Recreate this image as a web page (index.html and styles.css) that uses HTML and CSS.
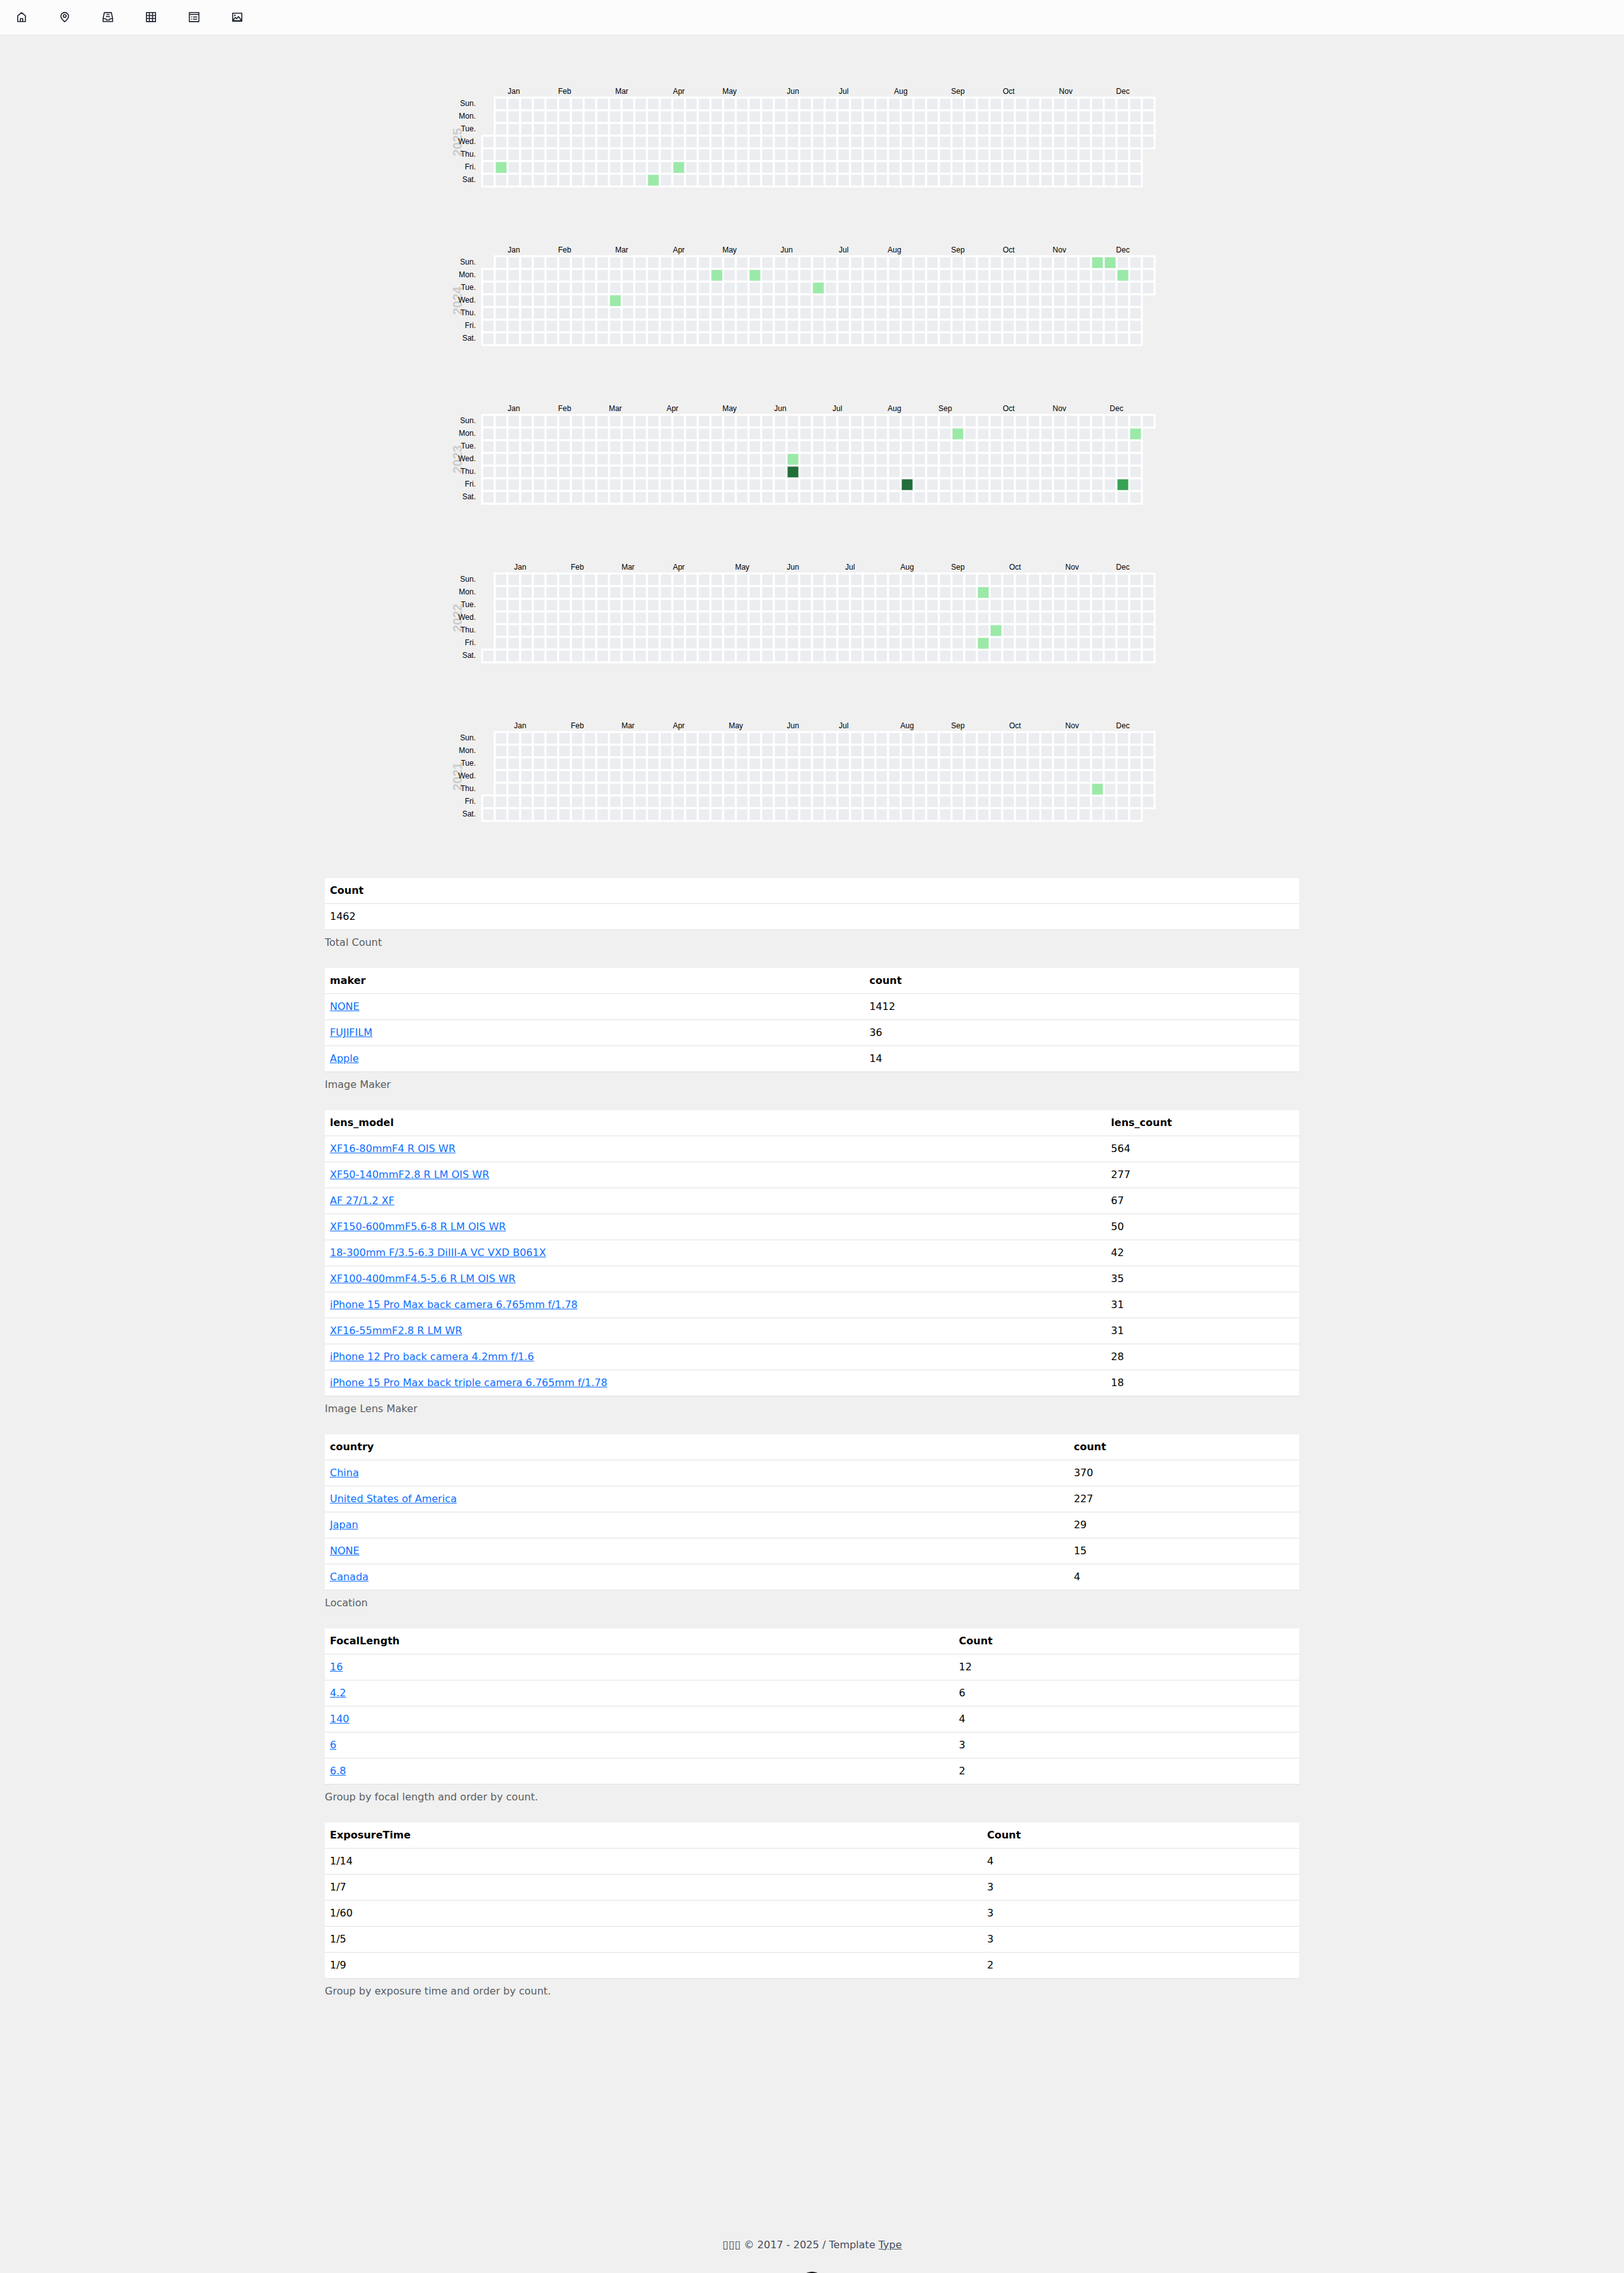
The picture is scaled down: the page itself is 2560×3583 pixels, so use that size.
FILE: index.html
```
<!DOCTYPE html>
<html lang="en">
<head>
<meta charset="utf-8">
<title>Gallery statistics</title>
<link rel="stylesheet" href="styles.css">
</head>
<body>
<nav class="navbar">
  <a class="nav-link" aria-label="Home"><svg class="icon" viewBox="0 0 18 18"><path d="M2.900 16V6.800L9 2l6.100 4.800V16zM7.200 16v-4.800h3.600V16"/></svg></a>
  <a class="nav-link" aria-label="Map"><svg class="icon" viewBox="0 0 18 18"><path d="M9 16.300C5.500 13.500 3 10.500 3 7.600a6 6 0 0 1 12 0C15 10.500 12.500 13.500 9 16.300z"/><circle cx="9" cy="7.200" r="2.200"/></svg></a>
  <a class="nav-link" aria-label="Archive"><svg class="icon" viewBox="0 0 18 18"><path d="M1.500 11.500 3.400 1.900h11.200l1.900 9.600V16h-15zM1.500 11.500h4l1.300 2h4.400l1.300-2h4M7 5h4.500M6 8.200h6.500"/></svg></a>
  <a class="nav-link" aria-label="Grid"><svg class="icon" viewBox="0 0 18 18"><path d="M1.800 1.800h14.400v14.300H1.800zM1.800 6.500h14.400M1.800 11.300h14.400M6.500 1.800v14.300M11.500 1.800v14.300"/></svg></a>
  <a class="nav-link" aria-label="List"><svg class="icon" viewBox="0 0 18 18"><path d="M1.500 1.800h15v14.300h-15zM1.500 4.800h15M4.200 8.800h1.500M7.200 8.800h6.600M4.200 12.200h1.500M7.200 12.200h6.600"/></svg></a>
  <a class="nav-link" aria-label="Pictures"><svg class="icon" viewBox="0 0 18 18"><path d="M1.800 2.800h14.400v12.600H1.800zM2 14.500l3.900-5 2.300 2 2.600-3.500 5.200 6.500z M2 14.700h14"/><circle cx="5.300" cy="6.200" r=".5"/></svg></a>
</nav>
<main class="content">
  <section class="calendars" id="calendars"></section>
  <section class="tables" id="tables"></section>
</main>
<footer class="footer">
  <p class="copyright"><span class="owner">▯▯▯</span> © 2017 - 2025 / Template <a class="template-link" href="#">Type</a></p>
  <svg class="badge" viewBox="0 0 40 40"><circle cx="20" cy="20" r="20"/></svg>
</footer>
<script src="main.js"></script>
</body>
</html>
```
FILE: styles.css
```
* { box-sizing: border-box; }
body {
  margin: 0;
  height: 3583px;
  overflow: hidden;
  display: flex;
  flex-direction: column;
  background: #f0f0f0;
  color: #000;
  font: 16px/24px "DejaVu Sans", sans-serif;
}
.navbar {
  display: flex;
  flex: none;
  height: 54px;
  background: #fcfcfc;
}
.nav-link {
  display: flex;
  align-items: center;
  justify-content: center;
  width: 68px;
}
.icon {
  width: 18px;
  height: 18px;
  fill: none;
  stroke: #1f2430;
  stroke-width: 1.600;
  stroke-linejoin: round;
}
.content {
  flex: none;
  width: 1536px;
  margin: 0 auto;
}
.calendars {
  display: flex;
  flex-direction: column;
  padding-top: 70px;
  height: 1330px;
}
.calendar {
  display: block;
  flex: none;
  width: 1536px;
  height: 250px;
}
.cell { stroke: #fff; stroke-width: 3; fill: #ebedf0; }
.mark-low { fill: #9be9a8; }
.mark-mid { fill: #38a355; }
.mark-high { fill: #216e39; }
.label { font: 12px "Liberation Sans", sans-serif; fill: #000; }
.month { text-anchor: middle; }
.day { text-anchor: end; }
.year { font: bold 20px "Liberation Sans", sans-serif; fill: #ccc; text-anchor: middle; }
.stats {
  width: 100%;
  margin-bottom: 20px;
  border-collapse: collapse;
  caption-side: bottom;
}
.stats th, .stats td {
  padding: 8px;
  text-align: left;
  background: #fff;
  border-bottom: 1px solid #dee2e6;
}
.stats caption {
  padding: 8px 0;
  text-align: left;
  color: #5b5e61;
}
.stats a { color: #0d6efd; text-decoration: underline; }
.footer {
  display: flex;
  flex-direction: column;
  align-items: center;
  flex: none;
  padding-top: 348px;
  color: #464c5b;
}
.copyright { margin: 0; height: 24px; }
.owner { font-size: 17.7px; line-height: 1; }
.template-link { color: inherit; }
.badge { width: 40px; height: 40px; margin-top: 30px; fill: #111; }
```
FILE: main.js
```
const years = [
  [2025, [[1, 5], [13, 6], [15, 5]]],
  [2024, [[10, 3], [18, 1], [21, 1], [26, 2], [48, 0], [49, 0], [50, 1]]],
  [2023, [[24, 3], [24, 4, 'high'], [33, 5, 'high'], [37, 1], [50, 5, 'mid'], [51, 1]]],
  [2022, [[39, 1], [39, 5], [40, 4]]],
  [2021, [[48, 4]]]
];
const months = ['Jan', 'Feb', 'Mar', 'Apr', 'May', 'Jun', 'Jul', 'Aug', 'Sep', 'Oct', 'Nov', 'Dec'];
const days = ['Sun.', 'Mon.', 'Tue.', 'Wed.', 'Thu.', 'Fri.', 'Sat.'];
const left = 248, top0 = 30, size = 20, DAY = 86400000;

document.getElementById('calendars').innerHTML = years.map(([year, marks]) => {
  const jan = Date.UTC(year, 0, 1);
  const offset = new Date(jan).getUTCDay();
  const index = t => Math.round((t - jan) / DAY) + offset;
  const end = index(Date.UTC(year, 11, 31));
  let s = '';
  for (let i = offset; i <= end; i++) {
    s += `<rect class="cell" x="${left + Math.floor(i / 7) * size}" y="${top0 + (i % 7) * size}" width="20" height="20"/>`;
  }
  for (const [c, r, level = 'low'] of marks) {
    s += `<rect class="mark-${level}" x="${left + c * size + 1.5}" y="${top0 + r * size + 1.5}" width="17" height="17"/>`;
  }
  s += `<text class="year" transform="translate(209 100) rotate(-90)" x="0" y="7">${year}</text>`;
  months.forEach((m, i) => {
    const a = Math.floor(index(Date.UTC(year, i, 1)) / 7);
    const b = Math.floor(index(Date.UTC(year, i + 1, 0)) / 7) + 1;
    s += `<text class="label month" x="${left + (a + b) * size / 2}" y="24">${m}</text>`;
  });
  days.forEach((d, i) => {
    s += `<text class="label day" x="238" y="${top0 + i * size + 13}">${d}</text>`;
  });
  return `<svg class="calendar" viewBox="0 0 1536 250">${s}</svg>`;
}).join('');

const tables = [
  { head: ['Count'], rows: [['1462']], caption: 'Total Count' },
  { head: ['maker', 'count'], link: true, rows: [['NONE', 1412], ['FUJIFILM', 36], ['Apple', 14]], caption: 'Image Maker' },
  { head: ['lens_model', 'lens_count'], link: true, rows: [
    ['XF16-80mmF4 R OIS WR', 564], ['XF50-140mmF2.8 R LM OIS WR', 277], ['AF 27/1.2 XF', 67],
    ['XF150-600mmF5.6-8 R LM OIS WR', 50], ['18-300mm F/3.5-6.3 DiIII-A VC VXD B061X', 42],
    ['XF100-400mmF4.5-5.6 R LM OIS WR', 35], ['iPhone 15 Pro Max back camera 6.765mm f/1.78', 31],
    ['XF16-55mmF2.8 R LM WR', 31], ['iPhone 12 Pro back camera 4.2mm f/1.6', 28],
    ['iPhone 15 Pro Max back triple camera 6.765mm f/1.78', 18]], caption: 'Image Lens Maker' },
  { head: ['country', 'count'], link: true, rows: [['China', 370], ['United States of America', 227], ['Japan', 29], ['NONE', 15], ['Canada', 4]], caption: 'Location' },
  { head: ['FocalLength', 'Count'], link: true, rows: [['16', 12], ['4.2', 6], ['140', 4], ['6', 3], ['6.8', 2]], caption: 'Group by focal length and order by count.' },
  { head: ['ExposureTime', 'Count'], rows: [['1/14', 4], ['1/7', 3], ['1/60', 3], ['1/5', 3], ['1/9', 2]], caption: 'Group by exposure time and order by count.' }
];
document.getElementById('tables').innerHTML = tables.map(t => `
<table class="stats"><caption>${t.caption}</caption>
<thead><tr>${t.head.map(h => `<th>${h}</th>`).join('')}</tr></thead>
<tbody>${t.rows.map(r => `<tr>${r.map((c, i) => `<td>${t.link && i === 0 ? `<a href="#">${c}</a>` : c}</td>`).join('')}</tr>`).join('')}</tbody>
</table>`).join('');
```
